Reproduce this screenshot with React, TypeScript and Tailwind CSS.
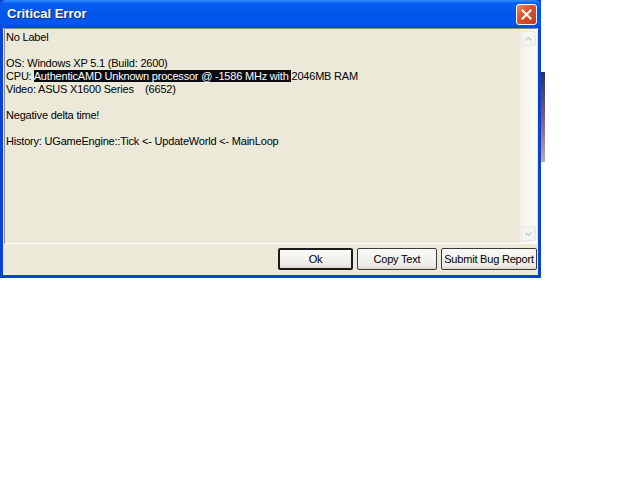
function ArrowUp() {
  return (
    <svg width="7" height="4" viewBox="0 0 7 4">
      <path d="M0.5 3.5 L3.5 0.5 L6.5 3.5" fill="none" stroke="#c4c9d6" strokeWidth="1.4" />
    </svg>
  );
}

function ArrowDown() {
  return (
    <svg width="7" height="4" viewBox="0 0 7 4">
      <path d="M0.5 0.5 L3.5 3.5 L6.5 0.5" fill="none" stroke="#c4c9d6" strokeWidth="1.4" />
    </svg>
  );
}

function XpButton({ label, isDefault, w }: { label: string; isDefault?: boolean; w: string }) {
  return (
    <button
      className={`${w} h-[22px] rounded-[2px] bg-[linear-gradient(to_bottom,#fafaf8,#ecebe6_85%,#d8d5c8)] text-[11px] tracking-[-0.2px] text-black flex items-center justify-center ${
        isDefault ? "border-2 border-[#1b1b1b]" : "border border-[#3c3c3c]"
      }`}
    >
      {label}
    </button>
  );
}

export default function App() {
  return (
    <div
      className="w-[640px] h-[480px] bg-white flex items-start"
      style={{ fontFamily: '"Liberation Sans", Arial, sans-serif' }}
    >
      <div className="w-[541px] h-[278px] bg-[#0843d6] flex flex-col px-[3px] pb-[3px]">
        {/* title bar */}
        <div className="h-[28px] -mx-[3px] px-[7px] flex items-center justify-between rounded-t-[6px] bg-[linear-gradient(to_bottom,#2f8dff_0%,#0a5ff2_12%,#0055e8_45%,#0258ee_85%,#0347d8_100%)]">
          <span className="text-white text-[13px] font-bold [text-shadow:1px_1px_0_#0a2c8c]">
            Critical Error
          </span>
          <div className="w-[21px] h-[21px] mr-[-3px] rounded-[3px] border border-white bg-[linear-gradient(135deg,#eb8a6a_0%,#e0522f_40%,#c83a1c_100%)] flex items-center justify-center">
            <svg width="11" height="11" viewBox="0 0 11 11">
              <path d="M1.5 1.5 L9.5 9.5 M9.5 1.5 L1.5 9.5" stroke="white" strokeWidth="2" strokeLinecap="square" />
            </svg>
          </div>
        </div>

        {/* body */}
        <div className="flex-1 bg-[#ece9d8] flex flex-col">
          <div className="flex-1 flex border-t border-l border-[#8a8a86] border-b border-b-white ml-[1px] mr-[1px]">
            <div className="flex-1 pl-[1px] pt-[2px] text-[11px] leading-[13px] tracking-[-0.2px] text-black whitespace-pre">
              <div>No Label</div>
              <div>&nbsp;</div>
              <div>OS: Windows XP 5.1 (Build: 2600)</div>
              <div>
                CPU:{" "}
                <span className="bg-[#0b0b12] text-white">AuthenticAMD Unknown processor @ -1586 MHz with </span>
                2046MB RAM
              </div>
              <div>Video: ASUS X1600 Series    (6652)</div>
              <div>&nbsp;</div>
              <div>Negative delta time!</div>
              <div>&nbsp;</div>
              <div>History: UGameEngine::Tick &lt;- UpdateWorld &lt;- MainLoop</div>
            </div>
            <div className="w-[17px] bg-[linear-gradient(to_right,#f3f1e6,#fdfdfa)] flex flex-col justify-between py-[2px] items-center">
              <div className="w-[15px] h-[15px] rounded-[2px] border border-[#e3e6ee] bg-[#f4f4f0] flex items-center justify-center">
                <ArrowUp />
              </div>
              <div className="w-[15px] h-[15px] rounded-[2px] border border-[#e3e6ee] bg-[#f4f4f0] flex items-center justify-center">
                <ArrowDown />
              </div>
            </div>
          </div>
          <div className="h-[31px] flex items-center justify-end gap-[4px] pr-[1px] pb-[1px]">
            <XpButton label="Ok" isDefault w="w-[75px]" />
            <XpButton label="Copy Text" w="w-[80px]" />
            <XpButton label="Submit Bug Report" w="w-[96px]" />
          </div>
        </div>
      </div>
      <div className="w-[4px] h-[90px] mt-[72px] bg-[linear-gradient(to_bottom,#3a2a55,#7a5c7e,#c0a8b8)]" />
    </div>
  );
}
